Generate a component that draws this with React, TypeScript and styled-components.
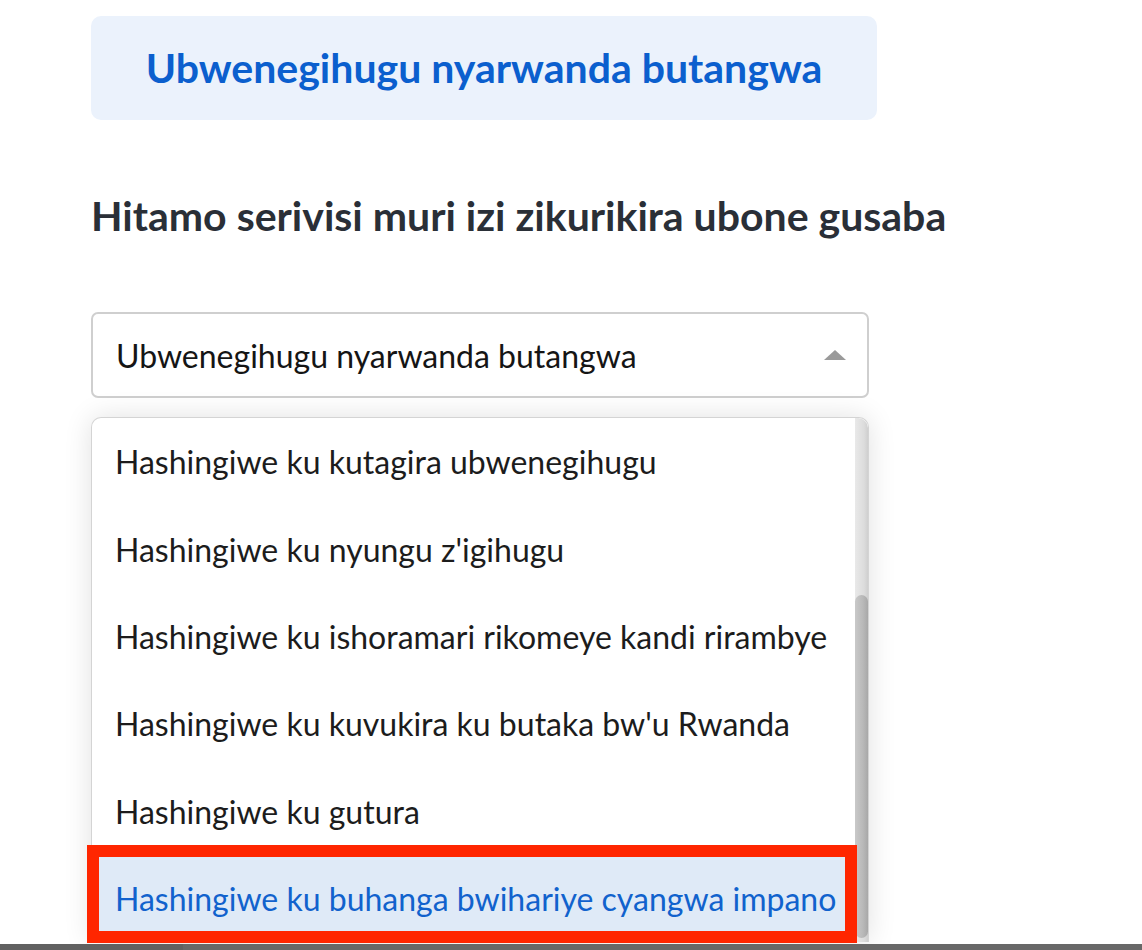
import React from "react";
import styled, { createGlobalStyle } from "styled-components";

const Global = createGlobalStyle`
  html, body { margin: 0; padding: 0; background: #ffffff; overflow: hidden; }
  body { font-family: Lato, "Open Sans", "Noto Sans", sans-serif; }
  * { box-sizing: border-box; }
`;

const Page = styled.div`
  width: 1142px;
  height: 950px;
  padding: 16px 0 0 91px;
  display: flex;
  flex-direction: column;
  align-items: flex-start;
`;

const Banner = styled.div`
  width: 786px;
  height: 104px;
  border-radius: 10px;
  background: #ebf2fc;
  display: flex;
  align-items: center;
  justify-content: center;
  color: #0b5fce;
  font-weight: 700;
  font-size: 41px;
  padding-bottom: 2px;
`;

const Heading = styled.h2`
  margin: 71px 0 0 0;
  font-size: 41px;
  font-weight: 700;
  color: #2a2f37;
  line-height: 50px;
  white-space: nowrap;
`;

const Select = styled.div`
  margin-top: 71px;
  width: 778px;
  height: 86px;
  border: 2px solid #cfcfcf;
  border-radius: 7px;
  display: flex;
  align-items: center;
  justify-content: space-between;
  padding: 0 21px 0 23px;
  font-size: 32px;
  color: #151515;
`;

const Caret = styled.svg`
  width: 22px;
  height: 10px;
  display: block;
`;

const ListBox = styled.div`
  margin-top: 19px;
  width: 778px;
  display: flex;
  border: 1px solid #d4d4d4;
  border-bottom: none;
  border-radius: 10px 10px 0 0;
  background: #fff;
  box-shadow: 0 0 28px rgba(0, 0, 0, 0.12);
`;

const Items = styled.div`
  flex: 1;
  display: flex;
  flex-direction: column;
  border-top-left-radius: 10px;
`;

const Item = styled.div<{ $active?: boolean }>`
  position: relative;
  height: 87.4px;
  flex: none;
  display: flex;
  align-items: center;
  padding-left: 23px;
  font-size: 32px;
  white-space: nowrap;
  color: ${(p) => (p.$active ? "#1162cd" : "#1c1c1c")};
  background: ${(p) => (p.$active ? "#dfeaf7" : "transparent")};
  ${(p) =>
    p.$active &&
    `
    &::after {
      content: "";
      position: absolute;
      left: -5px;
      right: -2px;
      top: -10px;
      bottom: -1px;
      border: 12px solid #ff2600;
      pointer-events: none;
    }
  `}
`;

const Track = styled.div`
  width: 13px;
  display: flex;
  flex-direction: column;
  background: linear-gradient(to right, #e9e9e9, #dcdcdc 70%, #cfcfcf);
  border-top-right-radius: 10px;
`;

const Thumb = styled.div`
  margin-top: 177px;
  flex: 1;
  margin-bottom: 4px;
  border-radius: 7px;
  background: linear-gradient(to right, #c9c9c9, #b9b9b9 60%, #a8a8a8);
`;

const BottomBar = styled.div`
  position: fixed;
  left: 0;
  right: 0;
  bottom: 0;
  height: 6px;
  display: flex;
`;

const BarPart = styled.div<{ $w?: number }>`
  height: 100%;
  background: ${(p) => (p.$w ? "#616161" : "#686868")};
  width: ${(p) => (p.$w ? `${p.$w}px` : "auto")};
  flex: ${(p) => (p.$w ? "none" : "1")};
`;

const options = [
  "Hashingiwe ku kutagira ubwenegihugu",
  "Hashingiwe ku nyungu z'igihugu",
  "Hashingiwe ku ishoramari rikomeye kandi rirambye",
  "Hashingiwe ku kuvukira ku butaka bw'u Rwanda",
  "Hashingiwe ku gutura",
  "Hashingiwe ku buhanga bwihariye cyangwa impano",
];

export default function App() {
  return (
    <>
      <Global />
      <Page>
        <Banner>Ubwenegihugu nyarwanda butangwa</Banner>
        <Heading>Hitamo serivisi muri izi zikurikira ubone gusaba</Heading>
        <Select>
          <span>Ubwenegihugu nyarwanda butangwa</span>
          <Caret viewBox="0 0 22 10">
            <polygon points="11,0 22,10 0,10" fill="#9a9a9a" />
          </Caret>
        </Select>
        <ListBox>
          <Items>
            {options.map((o, i) => (
              <Item key={o} $active={i === options.length - 1}>
                {o}
              </Item>
            ))}
          </Items>
          <Track>
            <Thumb />
          </Track>
        </ListBox>
      </Page>
      <BottomBar>
        <BarPart $w={183} />
        <BarPart />
      </BottomBar>
    </>
  );
}
